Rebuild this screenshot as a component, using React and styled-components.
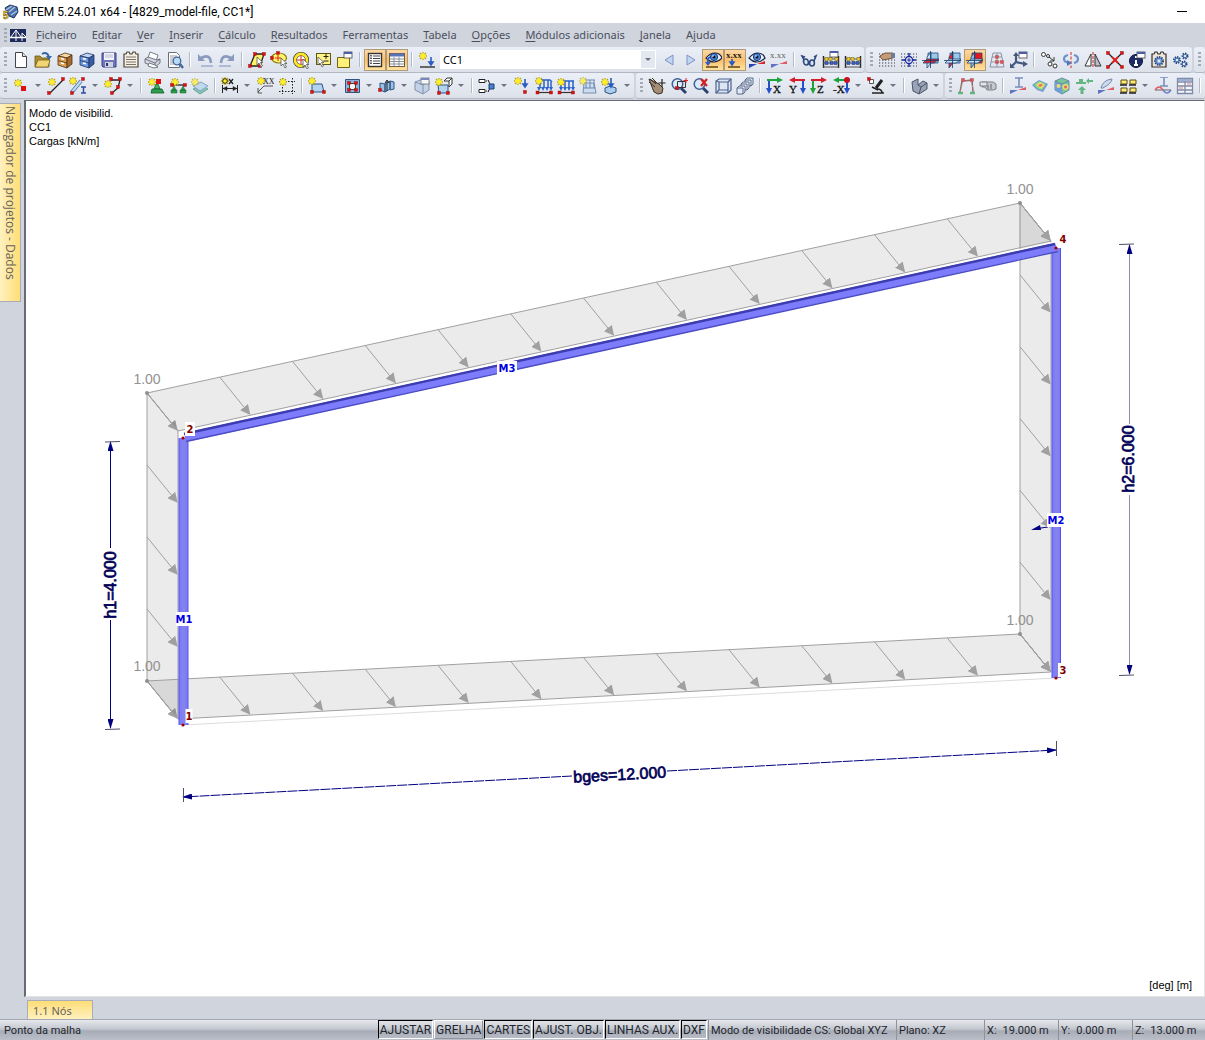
import React from 'react';
import styled, { createGlobalStyle } from 'styled-components';

/* ---------- icon parts ---------- */

const Star = ({ x = 4, y = 4 }) => (
  <g transform={`translate(${x} ${y})`}>
    <path d="M0-4V4M-4 0H4M-3-3L3 3M-3 3L3-3" stroke="#b9a70c" strokeWidth="1.300" />
    <path d="M0-3V3M-3 0H3" stroke="#ffee2a" strokeWidth="1.400" />
    <circle r="2.300" fill="#ffee2a" />
  </g>
);

const Dot = ({ x, y, c = '#e01010' }) => (
  <rect x={x - 1.5} y={y - 1.5} width="3" height="3" fill={c} stroke="#8d0b0b" strokeWidth=".4" />
);

const Cabinet = ({ top, front, side, line }) => (
  <g stroke={line} strokeWidth=".8">
    <path d="M2 5l7-3 7 2-5 3z" fill={top} />
    <path d="M2 5l9 2v10l-9-3z" fill={front} />
    <path d="M11 7l5-3v9l-5 4z" fill={side} />
    <path d="M2 9.500l9 2.500" fill="none" />
    <path d="M5 7.500l3 .8M5 12l3 .8" stroke="#fff" strokeWidth="1.400" />
  </g>
);

const Cursor = ({ x = 9, y = 7 }) => (
  <path
    transform={`translate(${x} ${y})`}
    d="M0 0v8l2-2 2 4 1.500-1-2-3.500H6z"
    fill="#fff"
    stroke="#555"
    strokeWidth=".8"
  />
);

const Eye = ({ x = 9, y = 6 }) => (
  <g transform={`translate(${x} ${y})`}>
    <path d="M-8 1Q-4-4 1-4T8 1Q4 5 0 5T-8 1z" fill="#e6effa" stroke="#14213f" strokeWidth="1.200" />
    <circle r="3.600" fill="#4c8bdc" stroke="#16376e" />
    <circle r="1.500" fill="#0a0f20" />
    <circle cx="-1" cy="-1" r=".8" fill="#fff" />
  </g>
);

const Win = ({ x = 9, y = 1 }) => (
  <g transform={`translate(${x} ${y})`}>
    <rect width="8" height="6" fill="#fff" stroke="#444" strokeWidth=".8" />
    <path d="M0 1h8" stroke="#4a5fa8" strokeWidth="2" />
  </g>
);

const Spark = ({ top = 12 }) => (
  <g>
    <path d={`M9 ${top + 1}L17 ${top - 2}V${top + 1}z`} fill="#e0232b" />
    <path d={`M1 ${top + 5}V${top + 1}H9z`} fill="#2843b4" />
  </g>
);

const Down = ({ x, y = 2, h = 12, c = '#2a5cc4' }) => (
  <path d={`M${x} ${y}v${h - 4}M${x - 2} ${y + h - 4}h4l-2 3z`} stroke={c} strokeWidth="1.600" fill={c} />
);

const Grid = () => (
  <path
    d="M1 3h16M1 6h16M1 9h16M1 12h16M1 15h16"
    stroke="#3b3b52"
    strokeWidth="1.200"
    strokeDasharray="1.200 1.800"
  />
);

const Planes = ({ a, b, c }) => (
  <g stroke="#1d4a7c" strokeWidth=".8">
    <path d="M6 2h10v10H6z" fill={a} />
    <path d="M9 1v11l-4 5V6z" fill={b} />
    <path d="M1 12l4-4h12l-5 4z" fill={c} />
    <path d="M0 9.500h17M8.500 0v17" stroke="#123a68" />
  </g>
);

const Gear = ({ x, y, r = 3 }) => (
  <g transform={`translate(${x} ${y})`}>
    <circle r={r} fill="#8fb0dd" stroke="#24477f" strokeWidth="2" strokeDasharray="1.300 1" />
    <circle r={r - 1} fill="none" stroke="#4b72b0" />
    <circle r="1" fill="#fff" />
  </g>
);

const Abacus = () => (
  <g>
    <path d="M1.500 5v12M16.500 5v12" stroke="#222" strokeWidth="1.400" />
    <path d="M1 8h16M1 12h16M1 16h16" stroke="#555" />
    <g fill="#f2d02c" stroke="#6b5a10" strokeWidth=".5">
      <rect x="3" y="6.500" width="3" height="3" />
      <rect x="7" y="6.500" width="3" height="3" />
      <rect x="13" y="6.500" width="3" height="3" />
    </g>
    <g fill="#3b63c6" stroke="#182b66" strokeWidth=".5">
      <rect x="3" y="10.500" width="3" height="3" />
      <rect x="8" y="10.500" width="3" height="3" />
      <rect x="12" y="10.500" width="3" height="3" />
    </g>
  </g>
);

const Lens = () => (
  <g>
    <path d="M11 11l5 5" stroke="#27406d" strokeWidth="2.800" />
    <circle cx="7.500" cy="7" r="5.300" fill="#dcebfb" stroke="#3e5f94" strokeWidth="1.500" />
  </g>
);

const Axis = ({ name, h, v, flip }) => (
  <g>
    <path d={flip ? 'M17 3H6' : 'M1 3h11'} stroke={h} strokeWidth="2" />
    <path d={flip ? 'M7 0v6L1 3z' : 'M11 0v6l6-3z'} fill={h} />
    <path d={flip ? 'M15 4v9' : 'M3 4v9'} stroke={v} strokeWidth="2" />
    <path d={flip ? 'M12 11h6l-3 6z' : 'M0 11h6l-3 6z'} fill={v} />
    <text
      x={flip ? 1 : 7}
      y="16"
      fontFamily="Liberation Serif, serif"
      fontSize="11"
      fill="#111"
      stroke="#111"
      strokeWidth=".3"
    >
      {name}
    </text>
  </g>
);

const LoadBlock = ({ wide }) => (
  <g>
    <path
      d={wide ? 'M3 4h14M4 4v7M8 4v7M12 4v7M16 4v7' : 'M3 3h12l2 2M5 3v8M9 3v8M13 3v8M16 5v6'}
      stroke="#2b62c8"
      strokeWidth="1.500"
      fill="none"
    />
    <path d="M2 10h4l-2 4zM6 10h4l-2 4zM10 10h4l-2 4zM14 10h4l-2 4z" fill="#2b62c8" />
    <path d="M3 15.500h13" stroke="#333" strokeWidth="1.200" />
    <Dot x={2.5} y={15.5} />
    <Dot x={16} y={15.5} />
  </g>
);

const Beam = ({ y = 1 }) => (
  <path d={`M6 ${y}h8M10 ${y}v9M6 ${y + 9}h8`} stroke="#4d67a5" strokeWidth="1.600" fill="none" />
);

const icons = {
  newFile: (
    <g stroke="#454545">
      <path d="M3.500 1.500h7l4 4v11h-11z" fill="#fff" />
      <path d="M10.500 1.500v4h4" fill="#dfe3ea" />
    </g>
  ),
  open: (
    <g>
      <path d="M1 5h5l2 2h7v9H1z" fill="#a98b30" stroke="#6b571c" strokeWidth=".8" />
      <path d="M1 16l3-7h12l-2 7z" fill="#f2d673" stroke="#79631f" strokeWidth=".8" />
      <path d="M8 3q5-3 7 3" stroke="#3a66a4" strokeWidth="2" fill="none" />
      <path d="M12 5h6l-3 4z" fill="#3a66a4" />
    </g>
  ),
  cabinet: <Cabinet top="#f6d8a6" front="#e0a050" side="#a36a2c" line="#4a3116" />,
  cabinetBlue: <Cabinet top="#bfd5f3" front="#6e98dc" side="#385ba3" line="#1e3565" />,
  save: (
    <g>
      <path d="M2 2h14v14H3l-1-1z" fill="#7076ba" stroke="#3c4182" />
      <path d="M4 2h10v7H4z" fill="#f3f5fa" />
      <path d="M5 4h8M5 6h8" stroke="#b7bbce" />
      <path d="M5 11h8v5H5z" fill="#cdd2e2" />
      <path d="M6 12h2v3H6z" fill="#2e3466" />
    </g>
  ),
  clipboard: (
    <g>
      <path d="M2 3h2l1-2h2l1 2h2l1-2h2l1 2h2v13H2z" fill="#f6efe3" stroke="#4e4438" strokeWidth="1.200" />
      <path d="M4 6h10M4 8.500h10M4 11h10M4 13.500h10" stroke="#7b746a" />
    </g>
  ),
  print: (
    <g stroke="#5a5e6c" strokeWidth=".8">
      <path d="M4 7l2-6 8 3-2 6z" fill="#fff" />
      <path d="M1 8l3-2 9 3 3-1v4l-5 4-10-4z" fill="#d3d6df" />
      <path d="M1 8l10 4 5-4M11 12v4" fill="none" />
      <path d="M5 12l6 2 3 2-4 1-6-2z" fill="#fff" />
    </g>
  ),
  preview: (
    <g>
      <path d="M2.500 1.500h8l3 3v12h-11z" fill="#fff" stroke="#6b6e78" />
      <path d="M4 5h7M4 7h8M4 9h6M4 11h4M4 13h4" stroke="#9a9daa" />
      <circle cx="11" cy="10" r="3.800" fill="#b8dbf5" stroke="#41669c" strokeWidth="1.300" />
      <path d="M14 13l3 4" stroke="#41669c" strokeWidth="2.400" />
    </g>
  ),
  undo: (
    <g>
      <path d="M5 7Q14 2 15 12" stroke="#8a9cbd" strokeWidth="2.600" fill="none" />
      <path d="M2 3v7h7z" fill="#8a9cbd" />
      <path d="M5 15h12" stroke="#9eaccb" strokeWidth="1.500" />
    </g>
  ),
  redo: (
    <g>
      <path d="M13 7Q4 2 3 12" stroke="#8a9cbd" strokeWidth="2.600" fill="none" />
      <path d="M16 3v7H9z" fill="#8a9cbd" />
      <path d="M1 15h12" stroke="#9eaccb" strokeWidth="1.500" />
    </g>
  ),
  selRhomb: (
    <g>
      <path d="M7 3h9l-4 12H2z" fill="#fff36a" stroke="#222" strokeWidth="1.300" />
      <Dot x={7} y={3} />
      <Dot x={16} y={3} />
      <Dot x={2} y={15} />
      <Dot x={12} y={15} />
      <Cursor x={9} y={6} />
    </g>
  ),
  selEllipse: (
    <g>
      <ellipse cx="9" cy="7" rx="7.500" ry="5" fill="#fff36a" stroke="#8a7a14" strokeWidth="1.200" />
      <path d="M8 4v6M5 7h6" stroke="#d22" />
      <Dot x={2} y={7} />
      <Dot x={8} y={2} />
      <Cursor x={11} y={7} />
    </g>
  ),
  selRing: (
    <g>
      <circle cx="9" cy="9" r="6" fill="#fff" stroke="#222" strokeWidth="4" />
      <circle cx="9" cy="9" r="6" fill="none" stroke="#ffe62e" strokeWidth="2.800" />
      <path d="M9 5v8M5 9h8" stroke="#d22" />
      <Cursor x={11} y={8} />
    </g>
  ),
  selPlus: (
    <g>
      <rect x="2.500" y="2.500" width="14" height="11" fill="#fff48a" stroke="#5f5612" />
      <path d="M12 3v5M9.500 5.500h5M9.500 10h5" stroke="#222" />
      <Cursor x={4} y={6} />
    </g>
  ),
  selWindow: (
    <g>
      <path d="M1.500 6.500h12v10h-12z" fill="#fff07a" stroke="#6d6216" />
      <Win x={8} y={1} />
    </g>
  ),
  navList: (
    <g>
      <rect x="2.500" y="2.500" width="13" height="13" fill="#fff" stroke="#333" strokeWidth="1.400" />
      <path d="M7 5h7M7 7.500h7M7 10h7M7 12.500h7" stroke="#444" />
      <path d="M5 4v10" stroke="#333" strokeDasharray="1.500 1" strokeWidth="1.500" />
    </g>
  ),
  table: (
    <g>
      <rect x="1.500" y="2.500" width="15" height="13" fill="#fff" stroke="#6a5f4c" />
      <path d="M2 4h14" stroke="#5a73b4" strokeWidth="3" />
      <path d="M2 8h14M2 10.500h14M2 13h14M6 6v9M11 6v9" stroke="#8b8f9a" />
    </g>
  ),
  newCase: (
    <g>
      <Star x={5} y={5} />
      <Down x={13} y={6} h={9} />
      <path d="M2 16h15" stroke="#222" strokeWidth="1.300" />
    </g>
  ),
  prev: <path d="M13 4v10L5 9z" fill="#c3d5ef" stroke="#7b95c4" />,
  next: <path d="M5 4v10l8-5z" fill="#c3d5ef" stroke="#7b95c4" />,
  showLoads: (
    <g>
      <Eye x={10} y={6} />
      <path d="M6 6q-3 2-2 6" stroke="#2a5cc4" strokeWidth="1.800" fill="none" />
      <path d="M1 11h6l-3 4z" fill="#2a5cc4" />
      <path d="M2 16h12" stroke="#5c4516" strokeWidth="1.500" />
    </g>
  ),
  showValues: (
    <g>
      <text x="0" y="7" fontSize="9" fontWeight="bold" fontFamily="Liberation Serif, serif" fill="#222">x.xx</text>
      <Down x={6} y={8} h={7} />
      <path d="M2 16h12" stroke="#5c4516" strokeWidth="1.500" />
    </g>
  ),
  showResults: (
    <g>
      <Eye y={6} />
      <Spark top={12} />
    </g>
  ),
  resultValues: (
    <g>
      <text x="0" y="7" fontSize="9" fontFamily="Liberation Serif, serif" fill="#222">x.xx</text>
      <Spark />
    </g>
  ),
  glasses: (
    <g stroke="#30487c" strokeWidth="1.600" fill="#d5e3f6">
      <ellipse cx="6" cy="11" rx="2.400" ry="3" transform="rotate(-15 6 11)" />
      <ellipse cx="12" cy="12" rx="2.400" ry="3" />
      <path d="M4 9L2 5l3 1M14 10l2-5-2 1M8 11l2 0" fill="none" />
    </g>
  ),
  abacusWin: (
    <g>
      <Abacus />
      <Win x={8} y={0} />
    </g>
  ),
  abacus: <Abacus />,
  gridHand: (
    <g>
      <Grid />
      <path d="M2 5l5-3h8v5l-5 1-5 1-2-2z" fill="#c79b75" stroke="#5c3b25" strokeWidth=".8" />
      <path d="M13 2h4v5h-4z" fill="#6e7b99" />
    </g>
  ),
  gridTarget: (
    <g>
      <Grid />
      <path d="M9 2v14M2 9h14" stroke="#1a2a9e" strokeWidth="1.500" />
      <circle cx="9" cy="9" r="3.500" fill="#eef2fb" stroke="#1a2a9e" strokeWidth="1.300" />
      <path d="M9 7v4M7 9h4" stroke="#1a2a9e" />
    </g>
  ),
  planeXY: <Planes a="#9cc7ea" b="#c9e2f5" c="#e0262c" />,
  planeYZ: <Planes a="#9cc7ea" b="#e0262c" c="#c9e2f5" />,
  planeXZ: <Planes a="#e8141c" b="#86bde8" c="#c9e2f5" />,
  mesh: (
    <g>
      <path d="M5 2h8l3 14H2zM9 2v14M4 6h10M3 11h12" fill="#e4e8ef" stroke="#65708a" />
      <Dot x={9} y={6} />
      <Dot x={9} y={11} />
      <Dot x={14} y={11} />
    </g>
  ),
  axisWin: (
    <g>
      <path d="M6 3v8l9 2M6 11l-4 4" stroke="#44597f" strokeWidth="2.200" fill="none" />
      <path d="M3 5l3-4 3 4zM0 12v5h5zM13 10l5 3-5 3z" fill="#44597f" />
      <Win x={9} y={1} />
    </g>
  ),
  moveCopy: (
    <g fill="#fff" stroke="#333">
      <circle cx="3.500" cy="3.500" r="2" />
      <circle cx="8" cy="5" r="1.500" />
      <path d="M9 6l5 4M14 6v4h-4" fill="none" />
      <circle cx="10" cy="13" r="2" />
      <circle cx="15" cy="15" r="2" />
    </g>
  ),
  rotate: (
    <g>
      <path d="M9 1v16" stroke="#d22" strokeDasharray="3 1.500" />
      <path d="M6 4Q2 5 2 8t5 4M12 4q4 1 4 4t-4 4" stroke="#6d92cb" strokeWidth="2.200" fill="none" />
      <path d="M5 9l5 3-5 3z" fill="#5377b5" />
    </g>
  ),
  mirror: (
    <g fill="none" stroke="#333">
      <path d="M7 3v12H1z" fill="#fff" />
      <path d="M11 3v12h6z" fill="#b9bec9" />
      <path d="M9 1v16" stroke="#d22" strokeDasharray="3 1" />
    </g>
  ),
  divide: (
    <g>
      <path d="M3 3l12 12M15 3L3 15" stroke="#222" strokeWidth="1.300" />
      <Dot x={2} y={2} />
      <Dot x={16} y={2} />
      <Dot x={2} y={16} />
      <Dot x={16} y={16} />
      <path d="M6 6l6 6M12 6l-6 6" stroke="#d22" strokeWidth="2" />
    </g>
  ),
  info: (
    <g>
      <circle cx="8" cy="10" r="6.500" fill="#1b2b66" stroke="#0a1438" />
      <path d="M8 5v2M8 9v5M6 14h4" stroke="#fff" strokeWidth="2" />
      <Win x={9} y={1} />
    </g>
  ),
  options: (
    <g>
      <path d="M2 3h2l1-2h2l1 2h2l1-2h2l1 2h2v13H2z" fill="#eee6da" stroke="#33302c" strokeWidth="1.200" />
      <Gear x={9} y={10} r={4} />
    </g>
  ),
  gears: (
    <g>
      <Gear x={5} y={9} />
      <Gear x={13} y={5} r={2.5} />
      <Gear x={12} y={13} r={2.5} />
    </g>
  ),
  node: (
    <g>
      <Star x={6} y={6} />
      <rect x="9" y="9" width="5" height="5" fill="#e01010" />
    </g>
  ),
  line: (
    <g>
      <path d="M3 16L16 3" stroke="#222" strokeWidth="1.300" />
      <Star x={5} y={5} />
      <Dot x={2} y={16} />
      <Dot x={16} y={2} />
    </g>
  ),
  member: (
    <g>
      <path d="M3 15L12 4" stroke="#4c78a8" strokeWidth="3.600" />
      <path d="M3 15L12 4" stroke="#c0dcf4" strokeWidth="2" />
      <Star x={4} y={4} />
      <Dot x={3} y={16} />
      <Dot x={14} y={2} />
      <path d="M12 10h5M14.500 10v6M12 16h5" stroke="#2e4f9e" strokeWidth="1.500" />
    </g>
  ),
  polyline: (
    <g>
      <path d="M7 3h9l-2 8-6 5" stroke="#222" fill="none" strokeWidth="1.300" />
      <Star x={4} y={7} />
      <Dot x={7} y={2} />
      <Dot x={16} y={2} />
      <Dot x={14} y={10} />
      <Dot x={8} y={16} />
    </g>
  ),
  support: (
    <g>
      <path d="M9 7h2l2 5H7z" fill="#43b565" stroke="#135c2a" strokeWidth=".8" />
      <path d="M5 12h10l2 4H4z" fill="#2ba14e" stroke="#135c2a" strokeWidth=".8" />
      <Star x={5} y={5} />
      <rect x="9" y="2" width="5" height="5" fill="#e01010" />
    </g>
  ),
  lineSupport: (
    <g>
      <path d="M3 8h13" stroke="#222" strokeWidth="1.300" />
      <path d="M5 9l2 4H3zM14 9l2 4h-4zM2 13h6v3H2zM11 13h6v3h-6z" fill="#2ba14e" stroke="#135c2a" strokeWidth=".5" />
      <Star x={6} y={5} />
      <Dot x={3} y={8} />
      <Dot x={16} y={8} />
    </g>
  ),
  surfSupport: (
    <g>
      <path d="M2 12l8-4 7 4-8 5z" fill="#5fb59a" stroke="#3f8c79" />
      <path d="M2 9l8-4 7 4-8 5z" fill="#b2d2f0" stroke="#5c87b5" />
      <Star x={4} y={5} />
    </g>
  ),
  dimension: (
    <g stroke="#222">
      <path d="M1.500 8v8M16.500 8v8M2 11.500h14" />
      <path d="M2 11.500l4-2v4zM16 11.500l-4-2v4z" fill="#222" strokeWidth=".5" />
      <Star x={4} y={4} />
      <path d="M8 2l4 5M12 2L8 7" strokeWidth="1.400" />
    </g>
  ),
  comment: (
    <g>
      <Star x={5} y={4} />
      <text x="7" y="7" fontSize="8" fontFamily="Liberation Serif, serif" fill="#111">XX</text>
      <path d="M17 9H8l-6 6M2 11v5h4" stroke="#555" fill="none" />
    </g>
  ),
  guide: (
    <g>
      <path d="M4.500 1v16M14.500 1v16M1 4.500h16M1 14.500h16" stroke="#222" strokeDasharray="1.500 1.500" />
      <Star x={5} y={5} />
    </g>
  ),
  surface: (
    <g>
      <path d="M4 7h10l2 8H4z" fill="#b2d2f0" stroke="#2e5480" />
      <Star x={4} y={4} />
      <Dot x={4} y={15} />
      <Dot x={16} y={15} />
    </g>
  ),
  opening: (
    <g>
      <path d="M2.500 2.500h14v13h-14z" fill="#8eb4db" stroke="#2e5480" />
      <path d="M6.500 6.500h6v6h-6z" fill="#f3f5fa" stroke="#444" />
      <Dot x={6} y={6} />
      <Dot x={13} y={6} />
      <Dot x={6} y={13} />
      <Dot x={13} y={13} />
    </g>
  ),
  solidFold: (
    <g>
      <path d="M2 6l5 1v8l-5-2zM7 7l5-3v8l-5 3zM12 4l4 1v7l-4 1z" fill="#9cc0e6" stroke="#2e5480" />
      <path d="M9 4v10M7 6l2-3 2 3" stroke="#222" fill="none" />
      <Dot x={2} y={13} />
    </g>
  ),
  solid: (
    <g>
      <path d="M2 5l8-3 6 2v9l-6 4-8-4z" fill="#b6cae4" stroke="#5d6f92" />
      <path d="M2 5l8 3 6-4M10 8v9" fill="none" stroke="#5d6f92" />
      <Win x={8} y={1} />
    </g>
  ),
  solidNew: (
    <g>
      <path d="M3 8h10v8H4z" fill="#b2d2f0" stroke="#2e5480" />
      <path d="M9 4l3-3h5v6l-3 3V4H9zM14 4l3-3" fill="#fff" stroke="#333" />
      <Star x={4} y={5} />
      <Dot x={4} y={16} />
      <Dot x={13} y={16} />
    </g>
  ),
  release: (
    <g stroke="#222">
      <path d="M1 2.500h6v3H1zM1 12.500h6v3H1z" fill="#fff" />
      <path d="M8 4h3M8 14h3" strokeDasharray="1 1" />
      <path d="M10 3l2 4M10 15l2-4" />
      <path d="M11 7h5v5h-5z" fill="#4a80cf" stroke="#1c3c74" />
    </g>
  ),
  nodalLoad: (
    <g>
      <Star x={5} y={4} />
      <Down x={12} y={2} h={9} />
      <Dot x={12} y={15} />
    </g>
  ),
  memberLoad: (
    <g>
      <LoadBlock />
      <Star x={4} y={4} />
    </g>
  ),
  lineLoad: (
    <g>
      <LoadBlock wide />
      <Star x={4} y={5} />
    </g>
  ),
  surfLoad: (
    <g>
      <path d="M5 6h10l2 10H4z" fill="#c4daf0" stroke="#4b6c93" />
      <path d="M7 3v8M11 3v8M15 3v8M6 3h10M5 11h11" stroke="#3a5f9c" />
      <Star x={4} y={4} />
    </g>
  ),
  freeLoad: (
    <g>
      <path d="M4 11l5-2 6 2v4l-6 2-5-2z" fill="#a9cdec" stroke="#2e5480" />
      <Down x={10} y={1} h={10} />
      <Star x={4} y={5} />
    </g>
  ),
  pan: (
    <g>
      <path d="M1 2l4 2 6 3 4 4-1 5-4 1-4-2-2-5z" fill="#a58d77" stroke="#3c2f24" />
      <path d="M2 2l6 5M1 5l6 5M4 1l5 5" stroke="#3c2f24" />
      <path d="M14 2v8M10.500 6h7" stroke="#222" strokeWidth="1.200" />
    </g>
  ),
  zoomWin: (
    <g>
      <Lens />
      <path d="M7.500 4.500h8v6h-8z" fill="none" stroke="#333" />
      <Dot x={7} y={11} />
      <path d="M16 1v5M13.500 3.500h4.500" stroke="#d22" />
    </g>
  ),
  zoomOut: (
    <g>
      <Lens />
      <path d="M9 2l6 7M15 2L9 9" stroke="#d81f1f" strokeWidth="2.200" />
    </g>
  ),
  box: (
    <g fill="#dde6f5" stroke="#4c628e" strokeWidth="1.200">
      <path d="M2 4l3-2h12v11l-3 3H2z" />
      <path d="M5 5h9v8H5zM2 4l3 1M17 2l-3 3M2 16l3-3M14 13v3" />
    </g>
  ),
  boxes: (
    <g fill="#e4eaf5" stroke="#4c5d82" strokeWidth=".9">
      <path d="M9 3l2-2h6v6l-2 2H9zM9 3h6v6" />
      <path d="M5 7l2-2h6v6l-2 2H5zM5 7h6v6" />
      <path d="M1 11l2-2h6v6l-2 2H1zM1 11h6v6" />
    </g>
  ),
  viewX: <Axis name="X" h="#1fa33c" v="#2451c9" />,
  viewY: <Axis name="Y" h="#d61f2b" v="#2451c9" flip />,
  viewZ: <Axis name="Z" h="#d61f2b" v="#1fa33c" />,
  viewMinusX: (
    <g>
      <Axis name="-X" h="#1fa33c" v="#2451c9" flip />
      <circle cx="15" cy="3" r="3" fill="#c81020" />
    </g>
  ),
  microscope: (
    <g>
      <path d="M9 11l6-8" stroke="#222" strokeWidth="3" />
      <path d="M5 16h12M10 12q5 0 5 4M5 10l6 3" stroke="#222" strokeWidth="1.600" fill="none" />
      <path d="M2.500 2.500h4v4h-4z" fill="#fff" stroke="#555" />
      <Dot x={2} y={2} />
    </g>
  ),
  steel: (
    <g stroke="#4b5365">
      <path d="M2 5l6-3v6l5-4 4 2v6l-8 5-6-3z" fill="#9aa4b8" />
      <path d="M8 8l3 2 6-4M11 10l-2 7" fill="none" />
    </g>
  ),
  frame: (
    <g>
      <path d="M3 15L5 4l10-1 1 12" stroke="#333" fill="none" strokeWidth="1.300" />
      <path d="M3 15L6 4l8 0 3 11" stroke="#d55" fill="none" strokeDasharray="2 1" />
      <Dot x={6} y={3} />
      <Dot x={15} y={3} />
      <path d="M1 16h5M13 16h5" stroke="#2ba14e" strokeWidth="2.400" />
    </g>
  ),
  cylinder: (
    <g stroke="#555">
      <path d="M3 5h11l3 2v5l-3 1H8l-2-3H3z" fill="#b9bbc2" />
      <path d="M1 5h7v4H1z" fill="#e0e1e5" />
      <path d="M9 8v4M12 7v5" stroke="#333" />
    </g>
  ),
  memberRes: (
    <g>
      <Beam />
      <Spark />
    </g>
  ),
  surfRes: (
    <g>
      <path d="M1 8l7-5 9 4-5 8-6-2z" fill="#3d7ed6" />
      <path d="M3 8l5-4 7 3-4 6-4-1z" fill="#5fc95a" />
      <path d="M5 8l4-3 5 3-4 4z" fill="#f0d835" />
      <path d="M7 8l3-1 2 1-3 2z" fill="#e0352b" />
    </g>
  ),
  solidRes: (
    <g>
      <path d="M2 4l7-3 7 3v9l-7 4-7-4z" fill="#46b96c" stroke="#36638e" />
      <path d="M2 4l7 3v10l-7-4z" fill="#3e7fd0" />
      <circle cx="12.500" cy="10" r="3" fill="#f3d63b" />
      <circle cx="12.500" cy="10" r="1.500" fill="#d8332a" />
      <circle cx="5.500" cy="9" r="2" fill="#f3d63b" />
      <path d="M2 4l7 3 7-3" fill="none" stroke="#36638e" />
    </g>
  ),
  reactions: (
    <g fill="#2ba14e">
      <path d="M4 2h4v3h3v2H1V5h3z" />
      <path d="M7 9l4 4H8.500v4h-3v-4H3z" />
      <path d="M11 4l3-3v2h4v2h-4v2z" />
    </g>
  ),
  section: (
    <g>
      <path d="M4 11Q6 3 15 2q0 4-9 9z" fill="#c5d5eb" stroke="#47608d" />
      <Spark />
    </g>
  ),
  panels: (
    <g fill="#ffe873" stroke="#5e5010">
      <path d="M2 3h6v4H2zM11 3h6v4h-6zM2 11h6v4H2zM11 11h6v4h-6z" />
      <path d="M1 8h7M10 8h7M1 16h7M10 16h7" stroke="#222" strokeWidth="1.500" />
    </g>
  ),
  diagram: (
    <g>
      <Beam y={0} />
      <path d="M1 13h16" stroke="#333" />
      <path d="M1 13q4-6 8 0" stroke="#d22" fill="none" strokeWidth="1.400" />
      <path d="M9 13q4 6 8 0" stroke="#2850c0" fill="none" strokeWidth="1.400" />
    </g>
  ),
  resultTable: (
    <g>
      <path d="M1.500 1.500h15v15h-15zM9 1v16M1 5h16M1 9h16M1 13h16" fill="#fff" stroke="#56648a" strokeWidth="1.300" />
      <path d="M2 3h6M10 3h6" stroke="#7f97c9" strokeWidth="2" />
      <path d="M3 11h4M11 7h4" stroke="#d55" />
    </g>
  ),
};

/* ---------- toolbar contents: [icon, label, state] ---------- */

const fileTools = [
  ['newFile', 'Novo'],
  ['open', 'Abrir'],
  ['cabinet', 'Gestor de projetos'],
  ['cabinetBlue', 'Gestor de blocos'],
  ['save', 'Guardar'],
  ['clipboard', 'Dados gerais'],
  ['print', 'Imprimir'],
  ['preview', 'Relatório'],
  '|',
  ['undo', 'Anular'],
  ['redo', 'Refazer'],
  '|',
  ['selRhomb', 'Seleção por losango'],
  ['selEllipse', 'Seleção por elipse'],
  ['selRing', 'Seleção por anel'],
  ['selPlus', 'Adicionar à seleção'],
  ['selWindow', 'Seleção especial'],
  '|',
  ['navList', 'Navegador', 'active'],
  ['table', 'Tabelas', 'active'],
  '|',
  ['newCase', 'Novo caso de carga'],
];

const caseTools = [
  ['prev', 'Anterior'],
  ['next', 'Seguinte'],
  ['showLoads', 'Mostrar cargas', 'active'],
  ['showValues', 'Valores de carga', 'active'],
  ['showResults', 'Mostrar resultados'],
  ['resultValues', 'Valores de resultados', 'dim'],
  '|',
  ['glasses', 'Modo de visibilidade'],
  ['abacusWin', 'Calcular parâmetros'],
  ['abacus', 'Calcular tudo'],
];

const planeTools = [
  ['gridHand', 'Plano de trabalho'],
  ['gridTarget', 'Origem da grelha'],
  ['planeXY', 'Plano XY'],
  ['planeYZ', 'Plano YZ'],
  ['planeXZ', 'Plano XZ', 'active'],
  ['mesh', 'Malha EF', 'dim'],
  ['axisWin', 'Sistema de coordenadas'],
  '|',
  ['moveCopy', 'Mover'],
  ['rotate', 'Rodar'],
  ['mirror', 'Espelhar'],
  ['divide', 'Dividir'],
  ['info', 'Informação'],
  ['options', 'Propriedades'],
  ['gears', 'Opções do programa'],
];

const modelTools = [
  ['node', 'Nó', 'menu'],
  ['line', 'Linha'],
  ['member', 'Barra', 'menu'],
  ['polyline', 'Polilinha', 'menu'],
  '|',
  ['support', 'Apoio nodal'],
  ['lineSupport', 'Apoio de linha'],
  ['surfSupport', 'Apoio de superfície', 'dim'],
  '|',
  ['dimension', 'Dimensão', 'menu'],
  ['comment', 'Comentário'],
  ['guide', 'Linha auxiliar'],
  '|',
  ['surface', 'Superfície', 'menu'],
  ['opening', 'Abertura', 'menu'],
  ['solidFold', 'Parede', 'menu'],
  ['solid', 'Sólido', 'dim'],
  ['solidNew', 'Novo sólido', 'menu'],
  '|',
  ['release', 'Libertação', 'menu'],
  ['nodalLoad', 'Carga nodal'],
  ['memberLoad', 'Carga de barra'],
  ['lineLoad', 'Carga de linha'],
  ['surfLoad', 'Carga de superfície', 'dim'],
  ['freeLoad', 'Carga livre', 'menu'],
];

const viewTools = [
  ['pan', 'Mover vista'],
  ['zoomWin', 'Zoom janela'],
  ['zoomOut', 'Zoom total'],
  ['box', 'Vista isométrica'],
  ['boxes', 'Vista anterior'],
  '|',
  ['viewX', 'Vista X'],
  ['viewY', 'Vista Y'],
  ['viewZ', 'Vista Z'],
  ['viewMinusX', 'Vista -X', 'menu'],
  ['microscope', 'Detalhe', 'menu'],
  '|',
  ['steel', 'Renderização', 'menu'],
];

const resultTools = [
  ['frame', 'Deformações', 'dim'],
  ['cylinder', 'Animação', 'dim'],
  '|',
  ['memberRes', 'Resultados de barras', 'dim'],
  ['surfRes', 'Resultados de superfícies', 'dim'],
  ['solidRes', 'Resultados de sólidos', 'dim'],
  ['reactions', 'Reações', 'dim'],
  ['section', 'Secções', 'dim'],
  ['panels', 'Painel', 'menu'],
  ['diagram', 'Diagrama', 'dim'],
  ['resultTable', 'Tabela de resultados', 'dim'],
  '|',
];

/* menu captions are split around the underlined access key */
const menus = [
  ['', 'F', 'icheiro'],
  ['E', 'd', 'itar'],
  ['', 'V', 'er'],
  ['', 'I', 'nserir'],
  ['', 'C', 'álculo'],
  ['', 'R', 'esultados'],
  ['Ferrame', 'n', 'tas'],
  ['', 'T', 'abela'],
  ['', 'O', 'pções'],
  ['', 'M', 'ódulos adicionais'],
  ['', 'J', 'anela'],
  ['A', 'j', 'uda'],
];

const toggles = [
  { text: 'AJUSTAR', on: true },
  { text: 'GRELHA', on: false },
  { text: 'CARTES', on: true },
  { text: 'AJUST. OBJ.', on: true },
  { text: 'LINHAS AUX.', on: true },
  { text: 'DXF', on: true },
];

function Tools({ items }) {
  return items.map((item, i) => {
    if (item === '|') return <Separator key={i} />;
    const [icon, label, state] = item;
    return (
      <ToolButton
        key={icon}
        type="button"
        aria-label={label}
        $active={state === 'active'}
        $dim={state === 'dim'}
        $menu={state === 'menu'}
      >
        <svg width="18" height="18" viewBox="0 0 18 18" fill="none">
          {icons[icon]}
        </svg>
        {state === 'menu' && <Caret />}
      </ToolButton>
    );
  });
}

/* ---------- model view ---------- */

const lerp = (a, b, t) => a + (b - a) * t;

function LoadEdge({ from, to, steps, skip = 0 }) {
  const arrows = [];
  for (let i = skip; i <= steps; i++) {
    const x = lerp(from[0], to[0], i / steps);
    const y = lerp(from[1], to[1], i / steps);
    arrows.push(<line key={i} x1={x} y1={y} x2={x + 30} y2={y + 37} markerEnd="url(#loadHead)" />);
  }
  return (
    <g stroke="#a0a0a0">
      <polygon
        points={`${from} ${to} ${to[0] + 31},${to[1] + 38} ${from[0] + 31},${from[1] + 38}`}
        fill="#000"
        fillOpacity=".08"
      />
      {arrows}
    </g>
  );
}

function Tag({ x, y, w, color, children }) {
  return (
    <g>
      <rect x={x - w / 2} y={y - 7} width={w} height="14" fill="#fff" />
      <text x={x} y={y + 4} fontSize="10" fontWeight="bold" fill={color} textAnchor="middle" fontFamily="DejaVu Sans, sans-serif">
        {children}
      </text>
    </g>
  );
}

function Model() {
  return (
    <ModelSvg viewBox="26 101 1178 895" role="img" aria-label="Modelo">
      <defs>
        <marker id="loadHead" markerWidth="10" markerHeight="10" refX="9" refY="5" orient="auto" markerUnits="userSpaceOnUse">
          <path d="M0 0L10 5L0 10z" fill="#a0a0a0" />
        </marker>
        <marker id="dimHead" markerWidth="10" markerHeight="6" refX="9" refY="3" orient="auto-start-reverse" markerUnits="userSpaceOnUse">
          <path d="M0 0L10 3L0 6z" fill="#000080" />
        </marker>
      </defs>

      <LoadEdge from={[147, 393]} to={[147, 681]} steps={4} />
      <LoadEdge from={[147, 681]} to={[1020, 634]} steps={12} skip={1} />
      <LoadEdge from={[1020, 203]} to={[1020, 634]} steps={6} />
      <LoadEdge from={[147, 393]} to={[1020, 203]} steps={12} skip={1} />
      <g fill="#909090">
        <circle cx="147" cy="393" r="2" />
        <circle cx="1020" cy="203" r="2" />
        <circle cx="147" cy="681" r="2" />
        <circle cx="1020" cy="634" r="2" />
      </g>
      <g fill="#929292" fontSize="14" textAnchor="middle">
        <text x="147" y="384">1.00</text>
        <text x="1020" y="194">1.00</text>
        <text x="147" y="671">1.00</text>
        <text x="1020" y="625">1.00</text>
      </g>
      <path d="M183 725L1056 678" stroke="#dcdcdc" />

      {/* members */}
      <path d="M179 432L1052 242V248L179 438z" fill="#fff" />
      <g fill="#7c7cfc">
        <rect x="179" y="438" width="9" height="287" />
        <rect x="1052" y="248" width="9" height="430" />
        <path d="M184 433L1055 243L1058 251L186 442z" />
      </g>
      <g fill="none">
        <path d="M183.500 438V725M1056.500 248V678" stroke="#8484e6" strokeWidth="3" />
        <path d="M179 438V725M188 442V725M1052 252V678M1060.500 248V678" stroke="#5252e8" />
        <path d="M184 434L1055 244" stroke="#3c3cae" strokeWidth="2.400" />
        <path d="M186 441.500L1058 251.500" stroke="#4c4cc4" strokeWidth="1.400" />
      </g>
      <g fill="#a00000">
        <circle cx="183" cy="438" r="1.600" />
        <circle cx="1056" cy="248" r="1.600" />
        <circle cx="183" cy="725" r="1.600" />
        <circle cx="1056" cy="678" r="1.600" />
      </g>
      <path d="M1048 527L1034 529" stroke="#000080" />
      <path d="M1031 530L1040 525L1041 530z" fill="#000080" />

      <Tag x={190} y={429} w={10} color="#800000">2</Tag>
      <Tag x={1063} y={239} w={8} color="#800000">4</Tag>
      <Tag x={189} y={716} w={7} color="#800000">1</Tag>
      <Tag x={1063} y={670} w={10} color="#800000">3</Tag>
      <Tag x={184} y={619} w={16} color="#0000e0">M1</Tag>
      <Tag x={507} y={368} w={20} color="#0000e0">M3</Tag>
      <Tag x={1056} y={520} w={18} color="#0000e0">M2</Tag>

      {/* dimensions */}
      <g stroke="#000080">
        <path d="M110.500 548V442" markerEnd="url(#dimHead)" />
        <path d="M110.500 620V728" markerEnd="url(#dimHead)" />
        <path d="M1129.500 424V245" markerEnd="url(#dimHead)" stroke="#8c8cb4" />
        <path d="M1129.500 495V674" markerEnd="url(#dimHead)" stroke="#8c8cb4" />
        <path d="M572 776L183 797" markerEnd="url(#dimHead)" strokeDasharray="10 1" />
        <path d="M667 771L1056 750" markerEnd="url(#dimHead)" strokeDasharray="10 1" />
        <path d="M105 442L120 441.500M105 729.500L120 729M1119 244.500L1134 244M1119 675.500L1134 675M183.500 788V802M1056.500 741V756" stroke="#50506e" />
      </g>
      <g fill="#000058" stroke="#000058" strokeWidth=".7" fontSize="16" textAnchor="middle">
        <text transform="translate(116 585) rotate(-90)">h1=4.000</text>
        <text transform="translate(1134 459) rotate(-90)">h2=6.000</text>
        <text transform="translate(620 780) rotate(-3)">bges=12.000</text>
      </g>
    </ModelSvg>
  );
}

export default function App() {
  return (
    <>
      <GlobalStyle />
      <Window>
        <TitleBar>
          <svg width="18" height="18" viewBox="0 0 18 18">
            <path d="M4 5l5-3 7 2 1 5-4 6-5-2z" fill="#4a6da3" stroke="#1d355f" />
            <path d="M5 7l6-4M8 9l6-5M10 12l6-4" stroke="#a9c4e6" strokeWidth="1.500" />
            <text x="2" y="16" fontSize="10" fontWeight="bold" fill="#ffd92e" stroke="#5a4408" strokeWidth=".5" fontFamily="Liberation Sans, sans-serif">5</text>
          </svg>
          <Title>RFEM 5.24.01 x64 - [4829_model-file, CC1*]</Title>
          <MinimizeButton type="button" aria-label="Minimizar" />
        </TitleBar>

        <MenuBar>
          <Grip />
          <svg width="16" height="13" viewBox="0 0 16 13">
            <rect width="16" height="13" fill="#1d2a5e" />
            <path d="M0 8.500h16" stroke="#fff" strokeWidth="1.500" />
            <path d="M6 1v11M12 4v8M6 1L1 8M6 1l5 7M12 4l4 4" stroke="#fff" fill="none" />
          </svg>
          <MenuList>
            {menus.map(([before, key, after]) => (
              <MenuItem key={after} type="button">
                {before}
                <u>{key}</u>
                {after}
              </MenuItem>
            ))}
          </MenuList>
        </MenuBar>

        <ToolRow>
          <Band>
            <Grip />
            <Tools items={fileTools} />
            <CaseBox>
              <select aria-label="Caso de carga" defaultValue="CC1">
                <option>CC1</option>
              </select>
              <CaseArrow>
                <Caret />
              </CaseArrow>
            </CaseBox>
            <Tools items={caseTools} />
          </Band>
          <Band>
            <Grip />
            <Tools items={planeTools} />
          </Band>
          <Band $fill>
            <Grip />
          </Band>
        </ToolRow>
        <ToolRow>
          <Band>
            <Grip />
            <Tools items={modelTools} />
          </Band>
          <Band>
            <Grip />
            <Tools items={viewTools} />
          </Band>
          <Band $fill>
            <Grip />
            <Tools items={resultTools} />
          </Band>
        </ToolRow>

        <Workspace>
          <SideBar>
            <SideTab type="button">Navegador de projetos - Dados</SideTab>
          </SideBar>
          <Canvas>
            <Model />
            <Legend>
              Modo de visibilid.
              <br />
              CC1
              <br />
              Cargas [kN/m]
            </Legend>
            <Units>[deg] [m]</Units>
          </Canvas>
        </Workspace>

        <TableTabs>
          <TableTab type="button">1.1 Nós</TableTab>
        </TableTabs>

        <StatusBar>
          <Hint>Ponto da malha</Hint>
          {toggles.map(({ text, on }) => (
            <Toggle key={text} type="button" aria-pressed={on} $on={on}>
              {text}
            </Toggle>
          ))}
          <Cell $width={187}>Modo de visibilidade CS: Global XYZ</Cell>
          <Cell $width={87}>Plano: XZ</Cell>
          <Cell $width={73}>
            <span>X:</span>19.000 m
          </Cell>
          <Cell $width={73}>
            <span>Y:</span>0.000 m
          </Cell>
          <Cell $width={73}>
            <span>Z:</span>13.000 m
          </Cell>
        </StatusBar>
      </Window>
    </>
  );
}

const GlobalStyle = createGlobalStyle`
  * {
    box-sizing: border-box;
  }
  body {
    margin: 0;
    font-family: 'Noto Sans', sans-serif;
    font-size: 11px;
    background: #cfd4dd;
  }
  button, select {
    font: inherit;
    color: inherit;
    margin: 0;
    padding: 0;
    border: none;
    background: none;
    white-space: nowrap;
  }
`;

const Window = styled.div`
  display: flex;
  flex-direction: column;
  height: 100vh;
  overflow: hidden;
  background: #cfd4dd;
`;

const TitleBar = styled.header`
  display: flex;
  align-items: center;
  flex: none;
  height: 23px;
  padding: 0 16px 0 1px;
  background: #fff;
`;

const Title = styled.div`
  flex: 1;
  padding-left: 4px;
  font-family: Roboto, sans-serif;
  font-size: 12px;
  color: #000;
`;

const MinimizeButton = styled.button`
  width: 14px;
  height: 14px;
  &::before {
    content: '';
    display: block;
    width: 10px;
    height: 1px;
    margin: 0 auto;
    background: #000;
  }
`;

const Grip = styled.div`
  flex: none;
  width: 3px;
  height: 15px;
  margin: 0 3px 0 4px;
  background: repeating-linear-gradient(#a4a9b6 0 2px, transparent 2px 4px);
`;

const MenuBar = styled.nav`
  display: flex;
  align-items: center;
  flex: none;
  height: 24px;
  color: #4c4f5c;
`;

const MenuList = styled.div`
  display: flex;
  gap: 15px;
  padding-left: 10px;
`;

const MenuItem = styled.button`
  line-height: 18px;
  u {
    text-underline-offset: 2px;
  }
`;

const ToolRow = styled.div`
  display: flex;
  gap: 2px;
  flex: none;
  height: 26px;
`;

const Band = styled.div`
  display: flex;
  align-items: center;
  flex: ${({ $fill }) => ($fill ? '1' : 'none')};
  border-radius: 3px;
  border-bottom: 1px solid #b3b7c2;
  background: linear-gradient(#ebeff7, #dde1ea);
`;

const Separator = styled.div`
  flex: none;
  width: 2px;
  height: 15px;
  margin: 0 3px;
  border-left: 1px solid #b4b9c6;
  background: #fff;
`;

const ToolButton = styled.button`
  display: flex;
  align-items: center;
  flex: none;
  width: ${({ $menu }) => ($menu ? '35px' : '22px')};
  height: 22px;
  padding-left: ${({ $active }) => ($active ? '1px' : '2px')};
  svg {
    flex: none;
    opacity: ${({ $dim }) => ($dim ? 0.7 : 1)};
  }
  ${({ $active }) =>
    $active &&
    `
    border: 1px solid #b09a78;
    background: linear-gradient(#fcd9a8, #fdc069 50%, #ffe39f);
  `}
`;

const Caret = styled.span`
  flex: none;
  margin-left: 5px;
  border: 3px solid transparent;
  border-top: 3px solid #6f7480;
  border-bottom: none;
`;

const CaseBox = styled.div`
  display: flex;
  align-items: stretch;
  position: relative;
  flex: none;
  width: 216px;
  height: 19px;
  margin: 0 2px;
  background: #fff;
  select {
    flex: 1;
    appearance: none;
    padding-left: 3px;
    color: #000;
    outline: none;
  }
`;

const CaseArrow = styled.span`
  display: flex;
  align-items: center;
  justify-content: center;
  position: absolute;
  top: 1px;
  right: 1px;
  bottom: 1px;
  width: 14px;
  background: #e3e7ef;
  pointer-events: none;
  ${Caret} {
    margin-left: 0;
  }
`;

const Workspace = styled.main`
  display: flex;
  flex: 1;
  min-height: 0;
  padding-top: 1px;
`;

const SideBar = styled.aside`
  flex: none;
  width: 24px;
  padding-top: 3px;
`;

const SideTab = styled.button`
  width: 21px;
  height: 199px;
  padding: 2px 0 0;
  border: 1px solid #a9adb9;
  border-left: none;
  background: linear-gradient(90deg, #fff1bf, #ffdd76);
  color: #66625c;
  font-family: 'Open Sans', sans-serif;
  font-size: 12px;
  writing-mode: vertical-rl;
  text-align: left;
  line-height: 18px;
`;

const Canvas = styled.section`
  position: relative;
  flex: 1;
  min-width: 0;
  border: 1px solid #666a73;
  border-left-width: 2px;
  border-right-color: #e3e3e3;
  border-bottom-color: #e3e3e3;
  background: #fff;
  font-family: 'Liberation Sans', sans-serif;
  color: #000;
`;

const ModelSvg = styled.svg`
  display: block;
  width: 100%;
  height: 100%;
`;

const Legend = styled.div`
  position: absolute;
  top: 5px;
  left: 3px;
  line-height: 14px;
`;

const Units = styled.div`
  position: absolute;
  right: 12px;
  bottom: 4px;
  line-height: 14px;
`;

const TableTabs = styled.div`
  display: flex;
  align-items: flex-end;
  flex: none;
  height: 22px;
  padding-left: 27px;
`;

const TableTab = styled.button`
  width: 66px;
  height: 19px;
  padding-left: 5px;
  border: 1px solid #a9adb9;
  border-bottom: none;
  background: linear-gradient(#ffdd76, #fff1bf);
  color: #66625c;
  text-align: left;
`;

const StatusBar = styled.footer`
  display: flex;
  align-items: stretch;
  flex: none;
  height: 21px;
  gap: 1px;
  border-top: 1px solid #a4a8b2;
  background: linear-gradient(#e6e8ec, #c3c7cf 45%, #a8acb7 55%, #bbbfc9);
  font-family: Roboto, sans-serif;
  color: #22252c;
  white-space: nowrap;
`;

const Hint = styled.div`
  flex: 1;
  padding-left: 4px;
  line-height: 21px;
`;

const Toggle = styled.button`
  margin-bottom: 1px;
  padding: 0 1px;
  font-size: 12px;
  border: 1px solid;
  border-color: ${({ $on }) => ($on ? '#000 #fff #fff #000' : '#fff #8e929c #8e929c #fff')};
`;

const Cell = styled.div`
  width: ${({ $width }) => $width}px;
  padding-left: 2px;
  border-left: 1px solid #8e929c;
  line-height: 21px;
  span {
    margin-right: 6px;
  }
`;
